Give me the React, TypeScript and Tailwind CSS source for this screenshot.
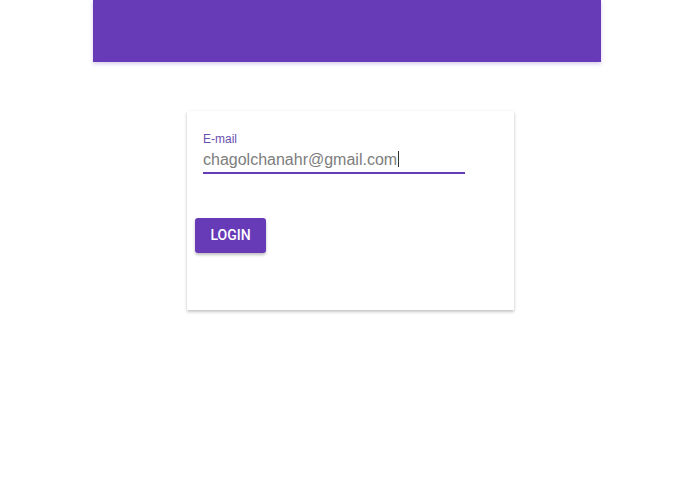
export default function App() {
  return (
    <div className="min-h-[494px] w-[695px] bg-white font-['Roboto',sans-serif]">
      <div className="ml-[93px] h-[62px] w-[508px] bg-[#673ab7] shadow-[0_2px_4px_rgba(103,58,183,0.25)]" />

      <div className="mt-[49px] flex justify-center pl-[6px]">
        <div className="h-[199px] w-[327px] bg-white shadow-[0_2px_3px_rgba(0,0,0,0.22),0_0_2px_rgba(0,0,0,0.06)]">
          <div className="px-4 pt-[21px]">
            <p className="text-[12px] leading-[14px] text-[#6a4fae] font-['Liberation_Sans',sans-serif]">
              E-mail
            </p>
            <div className="mt-[2px] w-[262px] border-b-2 border-[#673ab7]">
              <span className="text-[16px] leading-[19px] text-[#7d7d7d] font-['Liberation_Sans',sans-serif]">
                chagolchanahr@gmail.com
              </span>
              <span className="ml-[1px] inline-block h-[16px] w-px translate-y-[2px] bg-[#333]" />
            </div>
          </div>

          <div className="pl-2 pt-[44px]">
            <button className="flex h-[35px] w-[71px] items-center justify-center rounded-[3px] bg-[#673ab7] text-[14px] font-medium text-white shadow-[0_2px_3px_rgba(0,0,0,0.25)]">
              LOGIN
            </button>
          </div>
        </div>
      </div>
    </div>
  );
}
